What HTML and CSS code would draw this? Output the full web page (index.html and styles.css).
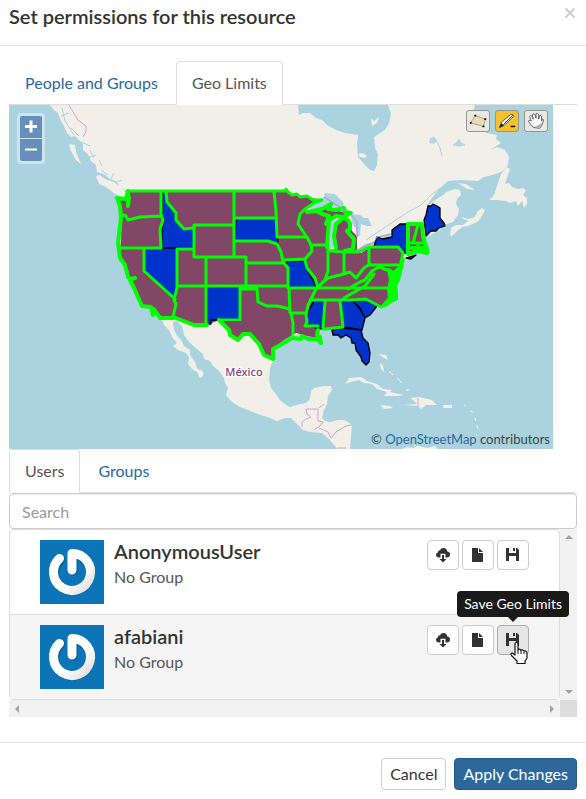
FILE: index.html
```html
<!DOCTYPE html>
<html lang="en">
<head>
<meta charset="utf-8">
<title>Set permissions for this resource</title>
<link rel="stylesheet" href="styles.css">
</head>
<body>
<svg class="defs" aria-hidden="true">
  <defs>
    <linearGradient id="ring" x1="0" y1="0" x2="1" y2="1">
      <stop offset="0.6" stop-color="#ffffff"/><stop offset="1" stop-color="#dddddd"/>
    </linearGradient>
    <symbol id="power" viewBox="0 0 64 64">
      <rect width="64" height="64" fill="#0b75b7"/>
      <path d="M32 30V14A18 18 0 1 1 19.5 18.6" transform="translate(1 1)" fill="none" stroke="#075c94" stroke-width="9" stroke-linecap="round" stroke-linejoin="round"/>
      <path d="M32 30V13.5A18.5 18.5 0 1 1 19.5 18.4" fill="none" stroke="url(#ring)" stroke-width="9" stroke-linecap="round" stroke-linejoin="round"/>
    </symbol>
    <symbol id="cloud" viewBox="0 0 16 16">
      <path fill="#333" d="M4 10.500C2 10.500 1 9.300 1 7.800 1 6.500 1.900 5.600 3 5.400 2.900 3.900 4 3 5.100 3.200 5.700 1.800 7 1 8.500 1c2.100 0 3.600 1.500 3.800 3.400C14 4.500 15 5.800 15 7.400c0 1.800-1.200 3.100-3 3.100h-1.500V6.800h-5v3.700z"/>
      <path fill="#333" d="M7 8h2v4h2.500L8 15.500 4.500 12H7z"/>
    </symbol>
    <symbol id="file" viewBox="0 0 16 16">
      <path fill="#333" d="M2 1h6v5h5v9H2zM9 1l4 4H9z"/>
    </symbol>
    <symbol id="save" viewBox="0 0 16 16">
      <path fill="#333" d="M1 1h3v5h7V1h1l2 2v11h-3V9H4v5H1zM8 1h2v3H8z"/>
    </symbol>
  </defs>
</svg>
<main class="modal">
  <header class="modal-header">
    <h1 class="modal-title">Set permissions for this resource</h1>
    <button class="close" type="button" aria-label="Close"><svg width="12" height="12" viewBox="0 0 12 12"><path d="M1.500 1.500l9 9M10.500 1.500l-9 9" stroke="#ccc" stroke-width="2"/></svg></button>
  </header>
  <div class="modal-body">
    <nav class="tabs">
      <a class="tab" href="#people">People and Groups</a>
      <a class="tab active" href="#geo">Geo Limits</a>
    </nav>
    <section class="map">
      <svg class="map-canvas" viewBox="9 105 544 344" role="img" aria-label="Map of North America">
        <rect x="9" y="105" width="544" height="344" fill="#aad3df"/>
        <g fill="#f2efe9">
          <path d="M50 105L54 110 58 113 60 120 64 126 67 133 71 137 75 136 79 140 83 144 83 150 88 154 91 161 96 165 97 172 104 174 110 179 116 181 120 187 126 191 118 198 121 215 119 240 120 252 128 268 133 279 141 305 150 308 161 317 164 325 169 330 172 337 177 343 173 346 178 350 186 353 189 357 188 364 192 369 197 372 200 378 203 376 202 372 197 368 195 362 190 355 190 350 184 346 181 340 178 337 174 330 173 322 177 321 182 326 184 335 190 343 197 349 203 354 204 359 210 361 213 366 219 371 224 378 225 383 228 388 226 395 232 402 240 407 258 414 270 418 277 421 285 418 291 418 297 424 303 430 310 432 322 433 329 439 334 445 338 449H350L352 425 348 422 344 420 338 420 330 422 325 421 322 418 324 410 327 404 328 396 332 390 331 386 324 386 314 388 311 391 310 399 306 403 300 404 290 407 286 405 280 400 276 394 271 388 269 380 270 368 274 358 273 346 290 336 318 330 325 325 345 328 355 329 360 330 358 315 382 306 395 297 396 280 402 268 408 256 418 252 428 252 424 238 440 230 444 225 453 222 458 215 459 209 456 204 457 199 461 195 460 190 455 189 446 192 438 198 427 206 432 198 440 188 448 181 461 180 478 181 484 177 496 174 503 171 508 165 509 157 505 150 497 147 490 150 501 143 496 139 497 135 486 133 485 127 478 122 477 116 473 112 475 105H388L391 114 389 123 385 130 374 137 375 148 378 154 377 165 374 171 370 170 364 164 358 157 357 144 358 135 345 133 336 130 327 125 322 120 316 118 310 113 303 113 299 115 298 105z"/>
          <path d="M96 176l4-1 5 4 9 3 8 6 5 7-3 3-9-4-9-7-7-3zM69 144l6 1 1 7 5 12-5-4-5-9z"/>
          <path d="M489 200l5-5 3-9 4-12 6-7 3 2-3 9-2 6 4-1 3 4 6 2 5-1 3 2-3 5 4 3v6l-3 4-2-7-4 5-2-5-6 2-4-2-9-1z"/>
          <path d="M450 235l1-7 5-3 7 0 6-5 5-2 4-7 4-3 3 2-3 6-3 3 3-1-5 4-9 4-6 1-6 5-4 4zM458 183l8 1 9 6-8-1zM462 217l6 2 8-2-6 4-7-2z"/>
          <path d="M345 384l4-6 12-1 6 4 10 3 6 5 9 1-2 2 14 3-6 1-14 0 3-4-10-3-5-5-8-1-5-3-9 2zM380 405l10 1 3 2-9 1zM403 405l14-1-4-4-3-2 9-1 13 3 5 5-11 0-5 4-3-3zM443 405h9v3h-9zM402 449l5-2 7 1 1-3 12 3 8-2 3 3z"/>
          <path d="M380 363l3 2 1 7-3-3zM378 354l8 1 2 5-4-2zM406 389l4 1-3 1zM200 369l4 4-3 4z"/>
        </g>
        <path d="M389 371l4 4M397 378l5 5M464 405l2 1M470 411l3 1M475 418l1 3M477 425l1 4M476 434l1 2" fill="none" stroke="#f2efe9" stroke-width="1"/>
        <g fill="#aad3df" stroke="#aad3df" stroke-width="1">
          <path d="M430 139l4-2 3 4-3 2-4 0zM453 145l4-3 2-3 2 4 4 2-6 1z" opacity=".85"/>
          <path d="M437 142l3 6 2 8" fill="none"/>
          <path d="M366 240L390 224 408 212 421 205 430 196 440 188" fill="none"/>
          <path d="M427 206l10-14 9-6-2 8-10 6z"/>
        </g>
        <path d="M371 118l3 3 5-4-2 6-5 3zM372 126l4-2M358 154l5-1 4 3-2 2-5-1z" fill="#f2efe9"/>
        <path d="M57 113l4 9M62 108l3 13M65 121l9 14M71 128l8 8M61 116l8-3M81 142l9 4M90 150l4 8M87 158l9-3M101 170l7 5M99 160l3 6M111 179l3-6M117 182l5-2" fill="none" stroke="#aad3df" stroke-width="1"/>
        <path d="M69 105l9 15 8 6v6l-3 5M302 427l0-5 4-3 5-2-4-3-1-5 2 0h10v12l5 1-3 4-6 4M319 408l5-4M319 428l9 4 3 6 5-6 10-6 6-1M338 448h8M418 398l0 9M415 447l5-5" fill="none" stroke="#d0a4d0" stroke-width="1"/>
        <path fill="#824766" d="M127 191H286V188L291 194 302 196 322 200 314 203 304 212 312 209 331 205 333 210 349 213 344 217 334 216 328 224 327 238 329 250 337 249 334 239 336 225 343 219 350 223 352 231 357 236 357 249 361 253 370 247H398L403 255 400 266 399 274 395 282 397 294 390 301 382 307 365 299 341 301 343 327 325 330 317 327 318 338 307 336 296 333 284 340 274 348 273 359 264 356 258 344 250 334 244 335 239 339 232 335 229 328 219 320 207 325 194 325 173 316 161 316 152 308 141 305 132 287 128 270 119 258 121 240 122 214 117 198 127 199z"/>
        <path fill="#824766" d="M409 224H422L424 240 426 250 409 254z"/>
        <g fill="#aad3df">
          <path d="M309 208l6-7 9-4 1-4 10 1 8 8 1 6-6 1-7-3-10 1-6 3zM329 247l-1-8 2-12 3-6 8-4-5 10-3 11 2 7-4 5zM350 214l10 1 4 3 4 0 4 8-5 0-6-2-1 11-3 3-1-9-3-4zM357 250l8-6 10-2-3 4-14 5zM376 238l15-5-1 4-12 3z"/>
        </g>
        <g fill="#0033cc" stroke="#000" stroke-width="1.300" stroke-linejoin="round">
          <path d="M162 191H166L167 203 175 212 176 220 184 229H194V248H162V230L164 220 162 215zM144 248H177V289L174 298 144 271zM236 218h40l2 26-10-3h-33zM207 287h33v34h-20v-1h-9v4h-4zM286 261h19l3 11 7 11 1 5h-28v-18z"/>
          <path d="M314 301h10l-1 28-7-1-10-3 2-13zM340 301h13l7 8 5 9-3 12-19-3zM353 301l13-2 11 7-7 9-5 3-5-10z"/>
          <path d="M332 330l11-2 18 2 2 8 5 5 2 10-1 9-3 3-4-4-1-4-5-7-1-7-3 0-1-5-5-3-5 3-3-3-5 0z"/>
          <path d="M374 246l3-9 6 2 9-2 0-7 8-6h8l1 29-5 0-6-6zM424 220l2-5 2-9 3 0 2-2 4 2 3 2v10l4 5 1 3-6 2-3 3-5 0-5 5zM406 258l10-3-5 4z"/>
        </g>
        <g class="borders">
          <path stroke-width="4" d="M117 198l9 1 2-8v15l1-9M117 198l3 8 1 12-3 25 2 15 5 7 3 12 2 2 5-1-5 2 4 8 8 18 9 1 2 8 1-6 6 9h13"/>
          <path d="M127 191H286v-2l2 3 4 3 5-1 3 3 7-1 6 4 9 0-8 3-9 6-5 5-2 10 8 12M121 214l5 2 2 4 12-3 22-1M161 192v23l2 5-3 9 1 19M119 248h42M177 249v39l-3 12 2 4-3 13M144 249v22l31 28M177 249h17M166 192l1 10 9 11 0 7 8 9 10-1M194 225h40v32h-40zM234 192v33M234 218h41M235 241h33l9 3 4 8 2 10M206 257v67M194 225v32h52v29M246 263h38l4 5v20M177 286h111M240 287v33h-21M240 289h17l1 13 9 4 10 0 13 3M274 192l2 19 1 26h30M283 260l22-1 7-8-1-6-4-8M313 245h15v26l-3 9-8 8M305 260l2 8 8 10 3 10M289 288l1 25h16M289 288h104M316 289l-4 8-4 8-2 10 1 7-2 4h13M291 313l2 10v11M311 300h40l15-1M325 301l-2 28h4M340 301l3 26-18 2M330 251l14 1v21M344 252l14 0 11-5v18h31M369 247h29l5 6-2 9-1 9M318 287l10-9 12-3 10-3 6 6 8-10 6-4M348 289l12-7 5-2 7-9 7-4 8 3M344 298l21-12 9-12M366 299l15 8 7-3"/>
          <path stroke-width="4" d="M173 317l21 8h13M219 320l10 10 1 5 8 5 5-6 7 0 9 10 5 11 9 4 0-10 9-5 10-6 9 1 1-3 6 3 9 0 4 4-1-6-3-2 1-5"/>
          <path stroke-width="4" d="M307 212l9-1 6 3 7 2-3 8 3-1-1 10-1 14M313 211l9-2 9-5-3 5 8 1 8-2 1 4 6 1-8 4-7-1-8 5M343 218l5 2 2 4 0 5 -3 2 4 5 3 3-1 10-8 2M341 220l-5 4-2 12 2 12"/>
          <path fill="#00ff00" stroke-width="2" d="M404 259L402 268 399 280 396 286 397 293 397 299 391 302 386 305 383 305 389 298 388 289 390 280 388 269 394 272 399 267z"/>
          <path stroke-width="4" d="M409 224H422L423 237 426 246M408 224V254L418 251 427 253V248H409"/>
          <path stroke-width="3" d="M418 225l-2 7-3 11M409 243h15M418 243v8"/>
        </g>
        <path d="M324 197l22 14M350 213l7 9 0 15M355 251l19-9 3-5 14-3" fill="none" stroke="#b68dca" stroke-width="1"/>
        <text class="place" x="244" y="376" text-anchor="middle">México</text>
      </svg>
      <div class="map-zoom">
        <button type="button" aria-label="Zoom in"><svg viewBox="0 0 22 22"><path d="M5 10.500h12M11 4.500v12" stroke="#fff" stroke-width="3"/></svg></button>
        <button type="button" aria-label="Zoom out"><svg viewBox="0 0 22 22"><path d="M5 10.500h12" stroke="#fff" stroke-width="2"/></svg></button>
      </div>
      <div class="map-tools">
        <button type="button" aria-label="Draw polygon"><svg viewBox="0 0 24 22"><path d="M9 5l11 4-2 8-14-4z" fill="#efdcab" stroke="#999" stroke-width="1"/><path d="M8 4h2v2H8zM19 8h2v2h-2zM17 16h2v2h-2zM3 12h2v2H3z"/></svg></button>
        <button type="button" class="selected" aria-label="Remove shape"><svg viewBox="0 0 24 22"><path d="M4 18l2-6 10-8q3-1 3 2l-9 9z" fill="#f5f5ef" stroke="#555" stroke-width="1"/><path d="M8 15l10-10M4 18l2-4 2 2z" stroke="#333" stroke-width="1"/><path d="M16 17h5" stroke="#000" stroke-width="1.500"/></svg></button>
        <button type="button" aria-label="Pan"><svg viewBox="0 0 24 22"><path d="M9 18L4 12Q3 9 7 11L5 6Q6 4 8 6l1 3-1-5q2-2 3 0l1 4 0-5q2-1 3 1v5l1-4q2-1 2 1v5l1-2q2 0 1 2-1 5-4 8z" fill="#fff" stroke="#555" stroke-width="1"/><path d="M10 18h6l3-5-5 3z" fill="#aaa"/></svg></button>
      </div>
      <p class="attribution">© <a href="#osm">OpenStreetMap</a> contributors</p>
    </section>
    <nav class="tabs">
      <a class="tab active" href="#users">Users</a>
      <a class="tab" href="#groups">Groups</a>
    </nav>
    <input class="search" type="search" placeholder="Search" aria-label="Search">
    <div class="scroller">
      <ul class="users">
        <li class="user">
          <svg class="avatar"><use href="#power"/></svg>
          <div class="who"><h2>AnonymousUser</h2><p>No Group</p></div>
          <div class="actions">
            <button type="button" aria-label="Download"><svg><use href="#cloud"/></svg></button>
            <button type="button" aria-label="File"><svg><use href="#file"/></svg></button>
            <button type="button" aria-label="Save Geo Limits"><svg><use href="#save"/></svg></button>
          </div>
        </li>
        <li class="user current">
          <svg class="avatar"><use href="#power"/></svg>
          <div class="who"><h2>afabiani</h2><p>No Group</p></div>
          <div class="actions">
            <button type="button" aria-label="Download"><svg><use href="#cloud"/></svg></button>
            <button type="button" aria-label="File"><svg><use href="#file"/></svg></button>
            <button type="button" class="hover" aria-labelledby="tip"><svg><use href="#save"/></svg></button>
            <span class="tooltip" id="tip" role="tooltip">Save Geo Limits</span>
            <svg class="cursor" viewBox="0 0 18 24"><path d="M5 2.500Q6.500 0 8 2.500V9Q9.500 7 11 9.300 12.500 8 14 10 16.500 9.500 17 12v5q-1 2-2 3v2.500H7V20L1.500 14.500Q0 12 2.500 12L5 14z" fill="#fff" stroke="#112" stroke-width="1.200" stroke-linejoin="round"/><path d="M8 9v4M11 9.500V13M14 10.500V13" stroke="#112" stroke-width="1"/></svg>
          </div>
        </li>
      </ul>
      <div class="bar vertical"><i class="up"></i><i class="down"></i></div>
      <div class="bar horizontal"><i class="left"></i><i class="right"></i></div>
      <div class="corner"></div>
    </div>
  </div>
  <footer class="modal-footer">
    <button class="btn" type="button">Cancel</button>
    <button class="btn primary" type="button">Apply Changes</button>
  </footer>
</main>
</body>
</html>
```
FILE: styles.css
```css
* { box-sizing: border-box; }
body { margin: 0; background: #fff; color: #555; font: 16px/22px Lato, "Liberation Sans", sans-serif; }
button, input { font: inherit; }
h1, h2, p, ul { margin: 0; padding: 0; }
a { color: #2a689d; text-decoration: none; }
.defs { position: absolute; width: 0; height: 0; }

.modal-header { display: flex; justify-content: space-between; align-items: flex-start; padding: 4px 10px 17px 9px; border-bottom: 1px solid #e5e5e5; }
.modal-title { color: #333; font-size: 20px; line-height: 24px; font-weight: 600; }
.close { display: flex; padding: 3px 0; border: 0; background: none; }
.modal-body { padding: 15px 9px 25px; }

.tabs { display: flex; border-bottom: 1px solid #ddd; }
.tab { padding: 10px 15px; margin-bottom: -1px; border: 1px solid transparent; border-radius: 4px 4px 0 0; }
.tab.active { color: #555; background: #fff; border-color: #ddd #ddd #fff; }
.tab + .tab { margin-left: 2px; }

.map { position: relative; margin-right: 24px; }
.map-canvas { display: block; width: 100%; }
.borders { fill: none; stroke: #00ff00; stroke-width: 3px; stroke-linejoin: round; stroke-linecap: round; }
.place { font: 500 11px "Noto Sans", sans-serif; fill: #83417f; stroke: #fff; stroke-width: 2px; paint-order: stroke; }
.map-zoom { position: absolute; top: 8px; left: 8px; display: grid; gap: 1px; padding: 3px; border-radius: 4px; background: rgba(255, 255, 255, .4); }
.map-zoom button { display: block; width: 22px; height: 22px; padding: 0; border: 0; border-radius: 2px 2px 0 0; background: #668fbb; }
.map-zoom button + button { border-radius: 0 0 2px 2px; }
.map-zoom svg, .map-tools svg { display: block; width: 100%; height: 100%; }
.map-tools { position: absolute; top: 5px; right: 5px; display: flex; gap: 5px; }
.map-tools button { width: 24px; height: 22px; padding: 0; border: 1px solid #96968c; border-radius: 3px; background: #e9e8e2; }
.map-tools .selected { background: #f4c02c; }
.attribution { position: absolute; right: 3px; bottom: 0; line-height: 20px; color: #444; font-size: 13px; }

.search { display: block; width: 100%; height: 36px; padding: 6px 12px; border: 1px solid #ccc; border-radius: 4px; color: #555; background: #fff; box-shadow: inset 0 1px 1px rgba(0, 0, 0, .075); }
.search::placeholder { color: #999; opacity: 1; }

.scroller { display: grid; grid-template-columns: 1fr 17px; }
.users { list-style: none; border: 1px solid #ddd; border-radius: 4px; }
.user { display: flex; gap: 10px; padding: 10px 30px; }
.current { border-top: 1px solid #ddd; background: #f5f5f5; }
.avatar { width: 64px; height: 64px; }
.who { flex: 1; }
.who h2 { color: #333; font-size: 20px; line-height: 22px; font-weight: 600; }
.who p { padding-top: 4px; }
.actions { position: relative; display: flex; align-items: flex-start; gap: 3px; }
.actions button { display: grid; place-items: center; width: 32px; height: 30px; padding: 0; border: 1px solid #ccc; border-radius: 4px; background: #fff; }
.actions button svg { width: 16px; height: 16px; }
.actions .hover { background: #e6e6e6; border-color: #adadad; }
.tooltip { position: absolute; right: -40px; bottom: 72px; padding: 3px 7px; border-radius: 4px; background: #1a1a1a; color: #fff; font-size: 14px; line-height: 20px; white-space: nowrap; }
.tooltip::after { content: ""; position: absolute; top: 100%; left: 50%; margin-left: -5px; border: 5px solid transparent; border-top-color: #1a1a1a; border-bottom: 0; }
.cursor { position: absolute; top: 16px; right: 1px; width: 18px; height: 24px; }

.bar { display: flex; justify-content: space-between; align-items: center; background: #f1f1f1; }
.bar i { border: 4px solid transparent; }
.vertical { flex-direction: column; padding: 6px 0; }
.horizontal { height: 17px; padding: 0 6px; }
.bar .up { border-top: 0; border-bottom-color: #a3a3a3; }
.bar .down { border-bottom: 0; border-top-color: #a3a3a3; }
.bar .left { border-left: 0; border-right-color: #a3a3a3; }
.bar .right { border-right: 0; border-left-color: #a3a3a3; }
.corner { background: #dcdcdc; }

.modal-footer { display: flex; justify-content: flex-end; gap: 8px; padding: 15px 9px; border-top: 1px solid #e5e5e5; }
.btn { padding: 4px 8px; border: 1px solid #ccc; border-radius: 4px; background: #fff; color: #333; }
.primary { border-color: #265c8b; background: #2c689c; color: #fff; }
```
